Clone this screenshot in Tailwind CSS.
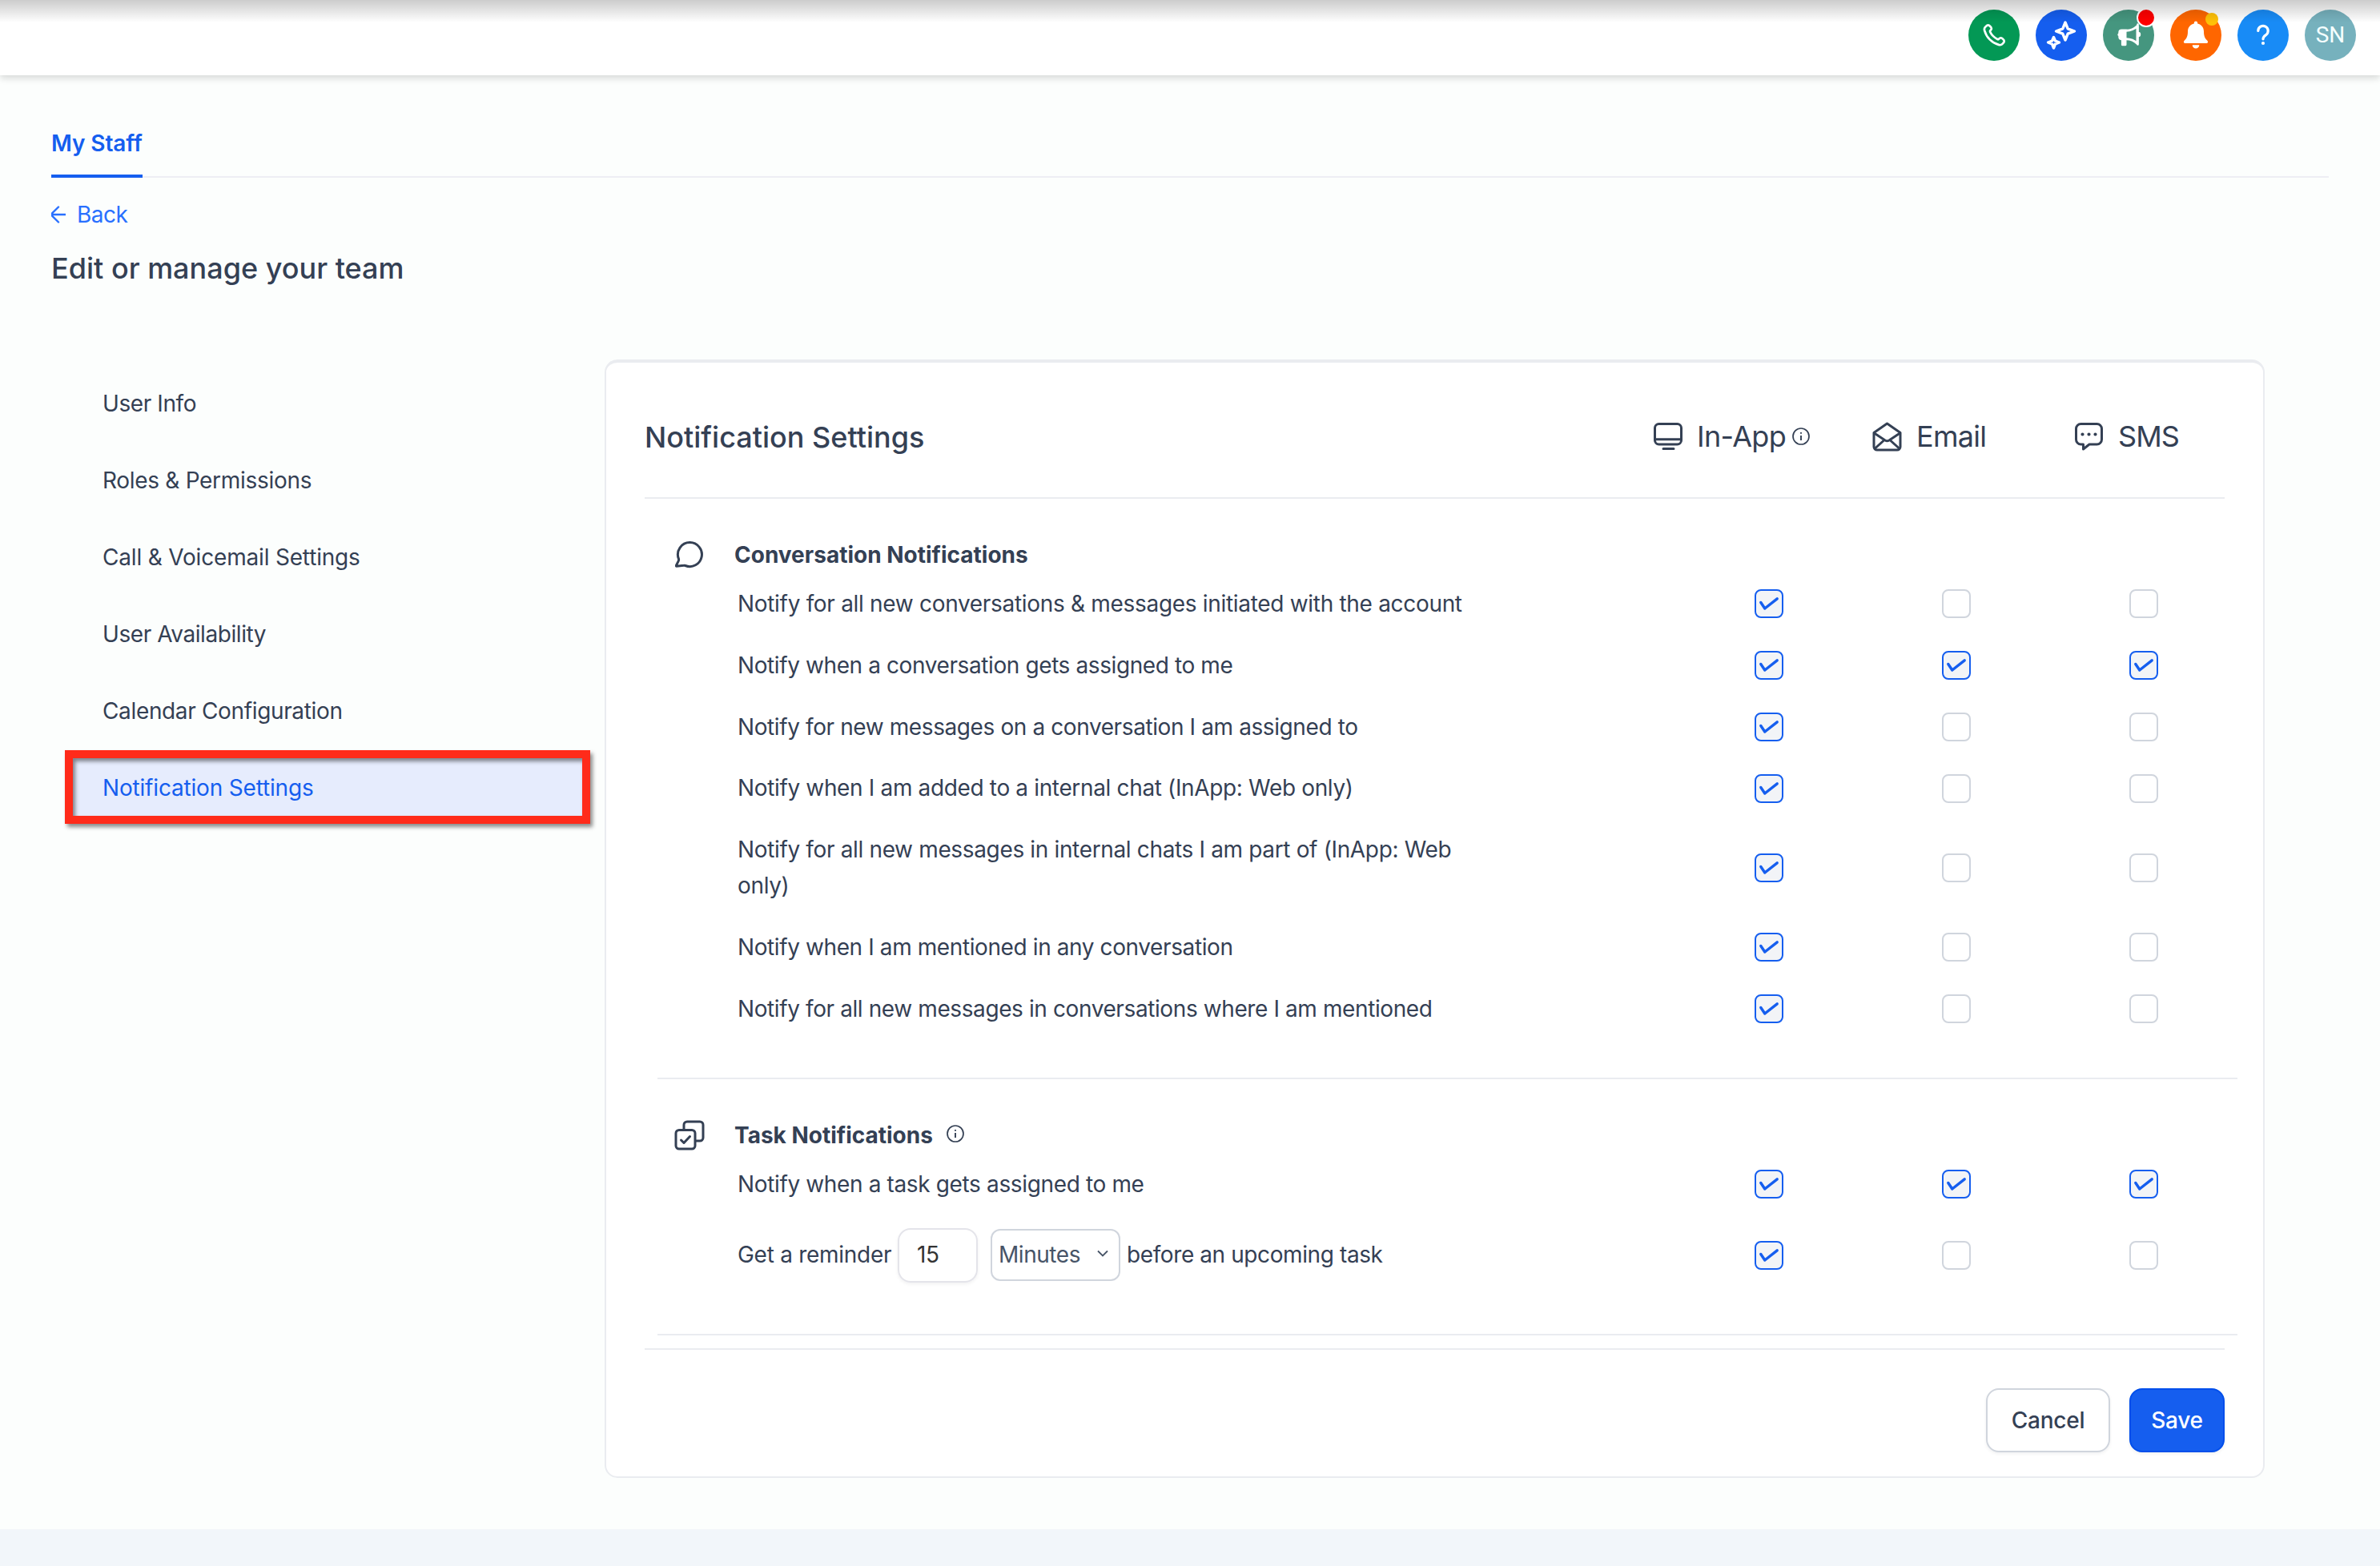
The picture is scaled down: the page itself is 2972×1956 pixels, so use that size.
<!DOCTYPE html>
<html lang="en">
<head>
    <meta charset="UTF-8">
    <meta name="viewport" content="width=device-width, initial-scale=1.0">
    <title>My Staff - Notification Settings</title>
    <script src="https://cdn.jsdelivr.net/npm/@tailwindcss/browser@4"></script>
    <style>
        body {
            font-family: 'Inter', 'Liberation Sans', sans-serif;
            font-variation-settings: 'opsz' 14;
        }
    </style>
</head>
<body class="bg-[#f2f6fa] text-[28px] leading-[40px] text-[#344054] w-[2972px] h-[1956px] overflow-hidden">
    <div class="relative h-[1910px] bg-[#fcfefd]">

        <!-- Top bar -->
        <header class="relative flex h-[94px] items-start justify-end gap-5 bg-white pt-3 pr-[30px] shadow-[0_4px_8px_rgba(0,0,0,0.14)]">
            <button class="flex size-16 items-center justify-center rounded-full bg-[#039855]">
                <svg class="size-8" viewBox="0 0 24 24" fill="none" stroke="white" stroke-width="2" stroke-linecap="round" stroke-linejoin="round">
                    <path d="M8.38 8.853a14.603 14.603 0 0 0 2.847 4.01 14.603 14.603 0 0 0 4.01 2.847c.124.06.187.09.265.112.28.082.625.023.862-.147.067-.048.124-.105.239-.219.35-.35.524-.524.7-.639a2 2 0 0 1 2.18 0c.176.115.35.29.7.64l.195.194c.532.531.797.797.942 1.082a2 2 0 0 1 0 1.806c-.145.285-.41.551-.942 1.082l-.157.158c-.53.53-.795.794-1.155.997-.4.224-1.02.386-1.478.384-.413-.001-.695-.081-1.26-.241a19.038 19.038 0 0 1-8.283-4.874A19.039 19.039 0 0 1 3.17 7.765c-.16-.564-.24-.846-.241-1.26a3.377 3.377 0 0 1 .384-1.477c.202-.36.467-.625.997-1.155l.157-.158c.532-.53.798-.797 1.083-.941a2 2 0 0 1 1.805 0c.286.144.551.41 1.083.942l.195.194c.35.35.524.525.638.7a2 2 0 0 1 0 2.18c-.114.177-.289.352-.638.701-.115.114-.172.172-.22.238-.17.238-.228.582-.147.862.023.08.053.142.113.266Z"/>
                </svg>
            </button>
            <button class="flex size-16 items-center justify-center rounded-full bg-[#155eef]">
                <svg class="size-16" viewBox="0 0 64 64" fill="none" stroke="white" stroke-width="3.4" stroke-linejoin="round">
                    <path d="M37 16l3.2 7.8L48.500 27l-8.300 3.200L37 38l-3.200-7.800L25.500 27l8.300-3.200z"/>
                    <path d="M22.500 34.500l2 4.500 5 2-5 2-2 5-2-5-5-2 5-2z"/>
                </svg>
            </button>
            <button class="relative flex size-16 items-center justify-center rounded-full bg-[#45967f]">
                <svg class="size-16" viewBox="0 0 64 64" fill="white">
                    <path d="M29.500 24.500v19.200a1.600 1.600 0 0 1-1.600 1.600h-3.400a1.600 1.600 0 0 1-1.600-1.600V38.200a4.200 4.200 0 0 1-3.600-4.200v-1a2.400 2.400 0 0 1 0-3.600V28.500a4 4 0 0 1 4-4z"/>
                    <path d="M29 26.200c5.500 0 10.200-1.900 14-5.700v22c-3.800-3.900-8.500-5.800-14-5.800" fill="none" stroke="white" stroke-width="3" stroke-linejoin="round"/>
                    <path d="M43.500 18.500v25" stroke="white" stroke-width="2.500" stroke-linecap="round"/>
                    <path d="M44 27.800a3.200 3.200 0 0 1 0 6.400z"/>
                </svg>
                <span class="absolute -top-0.5 -right-0.5 size-6 rounded-full border-2 border-white bg-[#ff0000]"></span>
            </button>
            <button class="relative flex size-16 items-center justify-center rounded-full bg-[#ff6600]">
                <svg class="size-16" viewBox="0 0 64 64" fill="white">
                    <path d="M32 14.500a2.200 2.200 0 0 1 2.200 2.200v.8c4.800 1 7.800 4.800 7.800 9.800 0 5.500 1.300 8.500 4.200 11.300.8.900 1 1.500.8 2.200-.2.800-.8 1.200-1.800 1.200H18.800c-1 0-1.600-.4-1.800-1.200-.2-.7 0-1.300.8-2.200C20.700 35.800 22 32.800 22 27.300c0-5 3-8.800 7.800-9.800v-.8a2.200 2.200 0 0 1 2.200-2.200z"/>
                    <path d="M27.700 44.200h8.600a4.300 4.300 0 0 1-8.600 0z"/>
                </svg>
                <span class="absolute top-1 right-1 size-4 rounded-full bg-[#ffc107]"></span>
            </button>
            <button class="flex size-16 items-center justify-center rounded-full bg-[#188bf6]">
                <svg class="size-16" viewBox="0 0 64 64" fill="none">
                    <path d="M25.800 26.500a6.200 6.200 0 1 1 9.500 5.300c-2.200 1.400-3.300 2.600-3.300 5" stroke="white" stroke-width="3.200" stroke-linecap="round"/>
                    <circle cx="32" cy="42" r="2.100" fill="white"/>
                </svg>
            </button>
            <div class="flex size-16 items-center justify-center rounded-full bg-[#76b1bd] font-['Roboto'] text-[28px] text-[#f4ffff]">SN</div>
            <div class="absolute inset-x-0 top-0 h-7 bg-linear-to-b from-black/20 to-transparent"></div>
        </header>

        <!-- Tabs -->
        <nav class="mx-16 mt-[60px] flex h-[68px] border-b-2 border-[#eeeef4]">
            <a class="-mb-0.5 h-[68px] border-b-4 border-[#155eef] pt-[5px] font-semibold tracking-[-0.1px] text-[#155eef]">My Staff</a>
        </nav>

        <a class="mt-[26px] ml-16 flex h-10 items-center gap-[14px] tracking-[-0.5px] text-[#2970ff]">
            <svg class="h-6 w-[18px]" viewBox="0 0 18 24" fill="none" stroke="currentColor" stroke-width="2.400" stroke-linecap="round">
                <path d="M17.500 12H0M9 2.500L-.500 12 9 21.500"/>
            </svg>
            Back
        </a>
        <h1 class="mt-[19px] ml-16 text-[36px] leading-[56px] font-medium">Edit or manage your team</h1>

        <div class="flex items-start">
            <!-- Side menu -->
            <aside id="menu" class="mt-[94px] ml-[81px] flex w-[674px] flex-col"></aside>

            <!-- Settings card -->
            <main class="mt-[86px] h-[1397px] w-[2073px] rounded-2xl border-2 border-t-4 border-[#eaecf0] bg-white">
                <div class="mx-12 flex h-[170px] items-center border-b-2 border-[#eaecf0] pt-4 text-[36px] leading-[56px]">
                    <h2 class="w-[1260px] pt-0.5 font-medium">Notification Settings</h2>
                    <div class="flex w-[273px] items-center tracking-[-0.7px]">
                        <svg class="mr-[18px] size-9" viewBox="0 0 36 36" fill="none" stroke="currentColor" stroke-width="3" stroke-linecap="round">
                            <rect x="1.500" y="2.500" width="33" height="25.500" rx="5"/>
                            <path d="M2 21.800h32M12 33.500h13"/>
                        </svg>
                        In-App
                        <svg class="ml-2 size-[22px]" viewBox="0 0 22 22" fill="none" stroke="currentColor">
                            <circle cx="11" cy="11" r="10" stroke-width="1.700"/>
                            <path d="M11 10v6M11 6v1.800" stroke-width="1.900"/>
                        </svg>
                    </div>
                    <div class="flex w-[253px] items-center tracking-[-0.7px]">
                        <svg class="mr-[18px] h-[37px] w-[37px]" viewBox="0 0 37 37" fill="none" stroke="currentColor" stroke-width="3" stroke-linejoin="round" stroke-linecap="round">
                            <path d="M2 13.500L18.500 2 35 13.500V31a4 4 0 0 1-4 4H6a4 4 0 0 1-4-4z"/>
                            <path d="M2.500 14l13.500 9q2.500 1.500 5 0l13.500-9M3.500 33L14 23.500M33.500 33L23 23.500"/>
                        </svg>
                        Email
                    </div>
                    <div class="flex items-center tracking-[-0.9px]">
                        <svg class="mr-[19px] h-[36px] w-[35px]" viewBox="0 0 35 36" fill="none" stroke="currentColor" stroke-width="3" stroke-linejoin="round">
                            <path d="M7.500 2.500h20a6 6 0 0 1 6 6v13.500a6 6 0 0 1-6 6H18L10.500 34v-6h-3a6 6 0 0 1-6-6V8.500a6 6 0 0 1 6-6z"/>
                            <path d="M9.500 15.500h.01M17.500 15.500h.01M25.500 15.500h.01" stroke-width="4.200" stroke-linecap="round"/>
                        </svg>
                        SMS
                    </div>
                </div>

                <section class="mx-16 h-[725px] w-[1973px] border-b-2 border-[#eaecf0] pt-[50px]">
                    <div class="ml-[22px] flex h-10 items-center font-bold">
                        <svg class="mr-[39px] size-[35px]" viewBox="0 0 35 35" fill="none" stroke="currentColor" stroke-width="3" stroke-linejoin="round">
                            <path d="M18.500 1.600a15 15 0 1 1-5.700 28.900c-.7-.3-1.300-.4-1.900-.3L1.700 31.200c-.3 0-.5-.3-.4-.6L4 25.200c.5-1 .8-2 .5-3.100A15 15 0 0 1 18.500 1.600z"/>
                        </svg>
                        Conversation Notifications
                    </div>
                    <div id="conversationRows" class="mt-[3px]"></div>
                </section>

                <section class="mx-16 h-[320px] w-[1973px] border-b-2 border-[#eaecf0] pt-[50px]">
                    <div class="ml-[21px] flex h-10 items-center font-bold">
                        <svg class="mr-[37px] size-[38px]" viewBox="0 0 38 38" fill="none" stroke="currentColor" stroke-width="3" stroke-linejoin="round" stroke-linecap="round">
                            <rect x="2" y="12.500" width="24" height="23.500" rx="4"/>
                            <path d="M12 12V6a4 4 0 0 1 4-4h16a4 4 0 0 1 4 4v16a4 4 0 0 1-4 4h-5.500M8.500 25l3.500 3.500L19.500 20.500"/>
                        </svg>
                        Task Notifications
                        <svg class="mb-1 ml-[17px] size-[22px]" viewBox="0 0 22 22" fill="none" stroke="currentColor">
                            <circle cx="11" cy="11" r="10" stroke-width="1.700"/>
                            <path d="M11 10v6M11 6v1.800" stroke-width="1.900"/>
                        </svg>
                    </div>
                    <div id="taskRows" class="mt-[3px]"></div>
                </section>

                <footer class="mx-12 mt-4 flex justify-end gap-6 border-t-2 border-[#eaecf0] pt-12">
                    <button class="h-20 w-[155px] rounded-2xl border-2 border-[#d0d5dd] bg-white font-medium tracking-[-0.2px] shadow-[0_2px_4px_rgba(16,24,40,0.06)]">Cancel</button>
                    <button class="h-20 w-[119px] rounded-2xl border-2 border-[#004eeb] bg-[#155eef] font-medium tracking-[-0.3px] text-white shadow-[0_2px_4px_rgba(16,24,40,0.06)]">Save</button>
                </footer>
            </main>
        </div>
    </div>

    <script>
        const menuItems = [
            ['User Info', 'tracking-[-0.4px]'],
            ['Roles &amp; Permissions', 'tracking-[-0.3px]'],
            ['Call &amp; Voicemail Settings', 'tracking-[-0.18px]'],
            ['User Availability', 'tracking-[-0.42px]'],
            ['Calendar Configuration', 'tracking-[-0.35px]'],
            ['Notification Settings', 'tracking-[-0.18px]']
        ];

        // [label, in-app, email, sms]
        const conversationRows = [
            ['<span class="tracking-[-0.31px]">Notify for all new conversations &amp; messages initiated with the account</span>', 1, 0, 0],
            ['Notify when a conversation gets assigned to me', 1, 1, 1],
            ['Notify for new messages on a conversation I am assigned to', 1, 0, 0],
            ['<span class="tracking-[-0.35px]">Notify when I am added to a internal chat (InApp: Web only)</span>', 1, 0, 0],
            ['<span class="tracking-[-0.35px]">Notify for all new messages in internal chats I am part of (InApp: Web<br>only)</span>', 1, 0, 0],
            ['Notify when I am mentioned in any conversation', 1, 0, 0],
            ['Notify for all new messages in conversations where I am mentioned', 1, 0, 0]
        ];

        const reminder = `
            <div class="flex items-center whitespace-nowrap">
                <span class="w-[200px] tracking-[-0.28px]">Get a reminder</span>
                <span class="flex h-[68px] w-[100px] items-center rounded-2xl border-2 border-[#e4e4ea] pl-[22px] text-[#333333] shadow-[0_2px_4px_rgba(16,24,40,0.06)]">15</span>
                <span class="ml-4 flex h-[65px] w-[162px] items-center rounded-xl border-2 border-[#d0d5dd] pl-2 tracking-[-0.45px] text-[#475467]">Minutes
                    <svg class="mb-1 ml-[20px] h-[10px] w-4" viewBox="0 0 16 10" fill="none" stroke="currentColor" stroke-width="1.800"><path d="M2 1.500l6 6 6-6"/></svg>
                </span>
                <span class="ml-2">before an upcoming task</span>
            </div>`;

        const taskRows = [
            ['<span class="tracking-[-0.36px]">Notify when a task gets assigned to me</span>', 1, 1, 1],
            [reminder, 1, 0, 0]
        ];

        function checkbox(on) {
            if (!on) {
                return '<span class="size-9 rounded-lg border-2 border-[#d0d5dd] bg-white"></span>';
            }
            return `
                <span class="size-9 rounded-lg border-2 border-[#155eef] bg-[#f2f4f7]">
                    <svg class="size-8" viewBox="0 0 32 32" fill="none" stroke="#155eef" stroke-width="3.400" stroke-linecap="round" stroke-linejoin="round"><path d="M5.800 14.500l5 7.500L26.200 9.800"/></svg>
                </span>`;
        }

        function row(item, rowClass) {
            return `
                <div class="${rowClass}">
                    <div class="w-[1270px] tracking-[-0.4px]">${item[0]}</div>
                    <div class="flex gap-[198px]">${checkbox(item[1])}${checkbox(item[2])}${checkbox(item[3])}</div>
                </div>`;
        }

        document.getElementById('menu').innerHTML = menuItems.map(([name, tracking], i) => {
            if (i === menuItems.length - 1) {
                return `<a class="h-[92px] w-[656px] border-10 border-[#ff2b1a] bg-[#e6ecfd] pt-[17px] pl-[37px] text-[#155eef] shadow-[3px_4px_5px_rgba(0,0,0,0.45),inset_3px_4px_5px_rgba(0,0,0,0.45)] ${tracking}">${name}</a>`;
            }
            return `<a class="flex h-24 items-center pb-[3px] pl-[47px] ${tracking}">${name}</a>`;
        }).join('');

        document.getElementById('conversationRows').innerHTML = conversationRows
            .map(item => row(item, 'ml-[100px] flex items-center py-4 leading-[44.8px]')).join('');
        document.getElementById('taskRows').innerHTML =
            row(taskRows[0], 'ml-[100px] flex items-center py-4 leading-[44.8px]') +
            row(taskRows[1], 'ml-[100px] mt-[15px] flex h-[70px] items-center leading-[44.8px]');
    </script>
</body>
</html>
